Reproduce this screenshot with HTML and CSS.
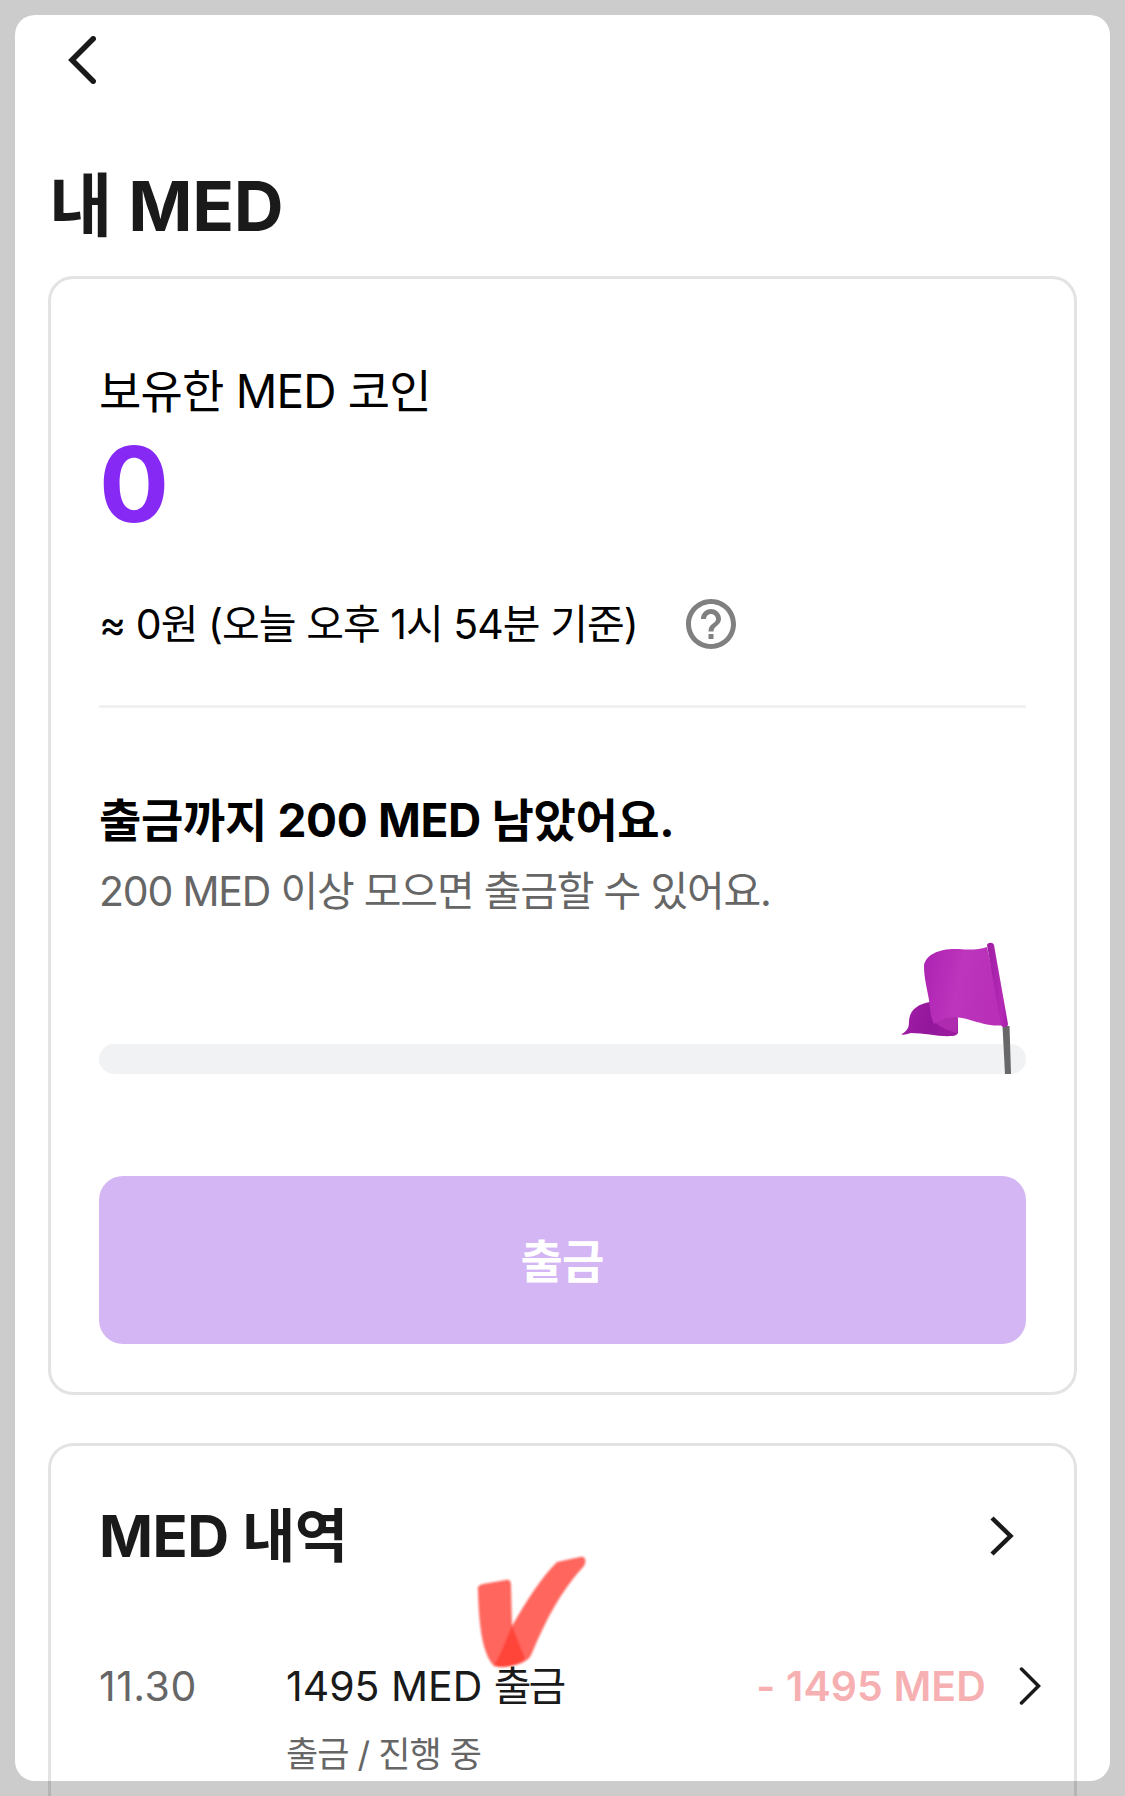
FILE: index.html
```html
<!DOCTYPE html>
<html lang="ko">

<head>
    <meta charset="UTF-8">
    <meta name="viewport" content="width=device-width, initial-scale=1.0">
    <title>내 MED</title>
    <link rel="stylesheet" href="styles.css">
</head>

<body>

    <div class="screen">
        <header class="topbar">
            <svg class="back" width="28" height="48" viewBox="0 0 28 48">
                <path d="M25.200 2.800L4 24L25.200 45.200" />
            </svg>
        </header>

        <h1 class="page-title">내 MED</h1>

        <section class="card balance">
            <p class="balance-label">보유한 MED 코인</p>
            <p class="balance-value">0</p>
            <div class="balance-rate">
                <span>≈ 0원 (오늘 오후 1시 54분 기준)</span>
                <svg class="help" width="60" height="60" viewBox="0 0 24 24">
                    <path d="M11 18h2v-2h-2v2zm1-16C6.480 2 2 6.480 2 12s4.480 10 10 10 10-4.480 10-10S17.520 2 12 2zm0 18c-4.410 0-8-3.590-8-8s3.590-8 8-8 8 3.590 8 8-3.590 8-8 8zm0-14c-2.210 0-4 1.790-4 4h2c0-1.100.9-2 2-2s2 .9 2 2c0 2-3 1.750-3 5h2c0-2.250 3-2.500 3-5 0-2.210-1.790-4-4-4z" />
                </svg>
            </div>

            <h2 class="goal-title">출금까지 200 MED 남았어요.</h2>
            <p class="goal-text">200 MED 이상 모으면 출금할 수 있어요.</p>
            <div class="progress">
                <svg class="flag" width="112" height="134" viewBox="0 0 112 134">
                    <defs>
                        <linearGradient id="cloth" x1="0" y1="0" x2="1" y2="0.2">
                            <stop offset="0" stop-color="#ab22b2" />
                            <stop offset="0.5" stop-color="#bd35bc" />
                            <stop offset="1" stop-color="#b92fb8" />
                        </linearGradient>
                        <linearGradient id="tail" x1="0" y1="0" x2="1" y2="0.2">
                            <stop offset="0" stop-color="#a41eaa" />
                            <stop offset="0.6" stop-color="#92179a" />
                            <stop offset="1" stop-color="#9c1ca0" />
                        </linearGradient>
                        <linearGradient id="sleeve" x1="0" y1="0" x2="1" y2="0">
                            <stop offset="0" stop-color="#9d1ca2" />
                            <stop offset="0.7" stop-color="#b42ab5" />
                            <stop offset="1" stop-color="#a51fa8" />
                        </linearGradient>
                    </defs>
                    <path d="M101.500 86L108.500 86L110 134L104 134Z" fill="#686868" />
                    <path d="M0 94.500C6 91 8 88 8 82C8 70 17 64 29 62L57 79V93C56 95 54 96 51 96C38 97 24 93 10 93C7 94 4 95 0 94.500Z" fill="url(#tail)" />
                    <path d="M30 74C32 86 46 90 56 93L57 77Z" fill="#ae2bb0" />
                    <path d="M23 26C24 14 40 8 58 9C68 10 77 10 86 7L103 85C91 87 80 83 69 80C56 76 44 76 33 84C29 76 29 68 28 60C26 48 23 38 23 26Z" fill="url(#cloth)" />
                    <path d="M86 5C87 2 92 2 93 5L107 84C107 88 101 88 100 85Z" fill="url(#sleeve)" />
                </svg>
            </div>
            <button class="withdraw" disabled>출금</button>
        </section>

        <section class="card history">
            <div class="history-head">
                <h2 class="history-title">MED 내역</h2>
                <svg class="more" width="24" height="40" viewBox="0 0 24 40">
                    <path d="M2 2L20.500 20L2 38" />
                </svg>
            </div>
            <div class="history-row">
                <span class="date">11.30</span>
                <div class="detail">
                    <span class="detail-name">1495 MED <span class="detail-type">출금</span></span>
                    <span class="detail-state">출금 / 진행 중</span>
                </div>
                <span class="amount">- 1495 MED</span>
                <svg class="go" width="22" height="38" viewBox="0 0 22 38">
                    <path d="M2.500 2L19.500 19L2.500 36" />
                </svg>
            </div>
            <!-- hand drawn check mark -->
            <svg class="check" width="120" height="124" viewBox="0 0 120 124">
                <path d="M3 36C2 33 4 31 8 30L31 26C34 25 36 27 36 31L37 72L50 105C41 112 28 115 19 112C8 100 4 76 3 36Z" />
                <path d="M19 112C27 98 32 84 37 72C52 46 66 24 82 8L105 3C110 2 112 6 109 12C85 38 71 66 57 99C54 109 38 114 19 112Z" />
            </svg>
        </section>
    </div>

    <div class="frame"></div>

</body>

</html>
```
FILE: styles.css
```css
* {
    box-sizing: border-box;
}

body {
    margin: 0;
    height: 1796px;
    overflow: hidden;
    background-color: #fff;
    color: #1a1a1a;
    font-family: Inter, "Noto Sans CJK KR", sans-serif;
}

h1,
h2,
p {
    margin: 0;
    white-space: nowrap;
}

.screen {
    padding: 36px 48px 0;
}

svg {
    display: block;
    flex-shrink: 0;
}

.back,
.more,
.go {
    fill: none;
    stroke: #1a1a1a;
}

.topbar {
    height: 128px;
    padding-left: 20px;
}

.back {
    stroke-width: 5.5;
    stroke-linecap: round;
}

.page-title {
    padding-left: 1px;
    font-size: 69px;
    line-height: 84px;
    font-weight: 700;
    letter-spacing: -0.3px;
}

.card {
    border: 3px solid #e3e3e3;
    border-radius: 25px;
    padding: 0 48px;
}

.balance {
    margin-top: 28px;
    height: 1119px;
    padding-top: 84px;
    color: #000;
}

.balance-label {
    font-size: 46px;
    line-height: 56px;
    letter-spacing: -0.8px;
}

.balance-value {
    margin-top: 10px;
    font-size: 104px;
    line-height: 110px;
    font-weight: 700;
    color: #8729f4;
}

.balance-rate {
    display: flex;
    align-items: center;
    gap: 43px;
    margin-top: 55px;
    height: 114px;
    padding-bottom: 51px;
    border-bottom: 3px solid #f1f1f1;
    font-size: 41px;
    line-height: 50px;
    letter-spacing: -0.95px;
    white-space: nowrap;
}

.help {
    fill: #808080;
}

.goal-title {
    margin-top: 84px;
    font-size: 46px;
    line-height: 56px;
    font-weight: 700;
    letter-spacing: -0.35px;
}

.goal-text {
    margin-top: 18px;
    font-size: 41px;
    line-height: 50px;
    letter-spacing: -1.2px;
    color: #666;
}

.progress {
    position: relative;
    margin-top: 128px;
    height: 30px;
    border-radius: 15px;
    background-color: #f1f2f4;
}

.flag {
    position: absolute;
    right: 13px;
    bottom: 0;
}

.withdraw {
    display: block;
    width: 100%;
    height: 168px;
    margin-top: 102px;
    padding: 0 1px 4px 0;
    border: none;
    border-radius: 24px;
    background-color: #d3b6f3;
    color: #fff;
    font-family: inherit;
    font-size: 46px;
    font-weight: 700;
    letter-spacing: -0.8px;
}

.history {
    position: relative;
    margin-top: 48px;
    height: 353px;
    padding-top: 55px;
    border-bottom: none;
    border-radius: 25px 25px 0 0;
}

.history-head {
    display: flex;
    align-items: center;
    justify-content: space-between;
    padding-right: 12px;
}

.history-title {
    font-size: 58px;
    line-height: 70px;
    font-weight: 700;
    letter-spacing: -0.5px;
}

.more {
    stroke-width: 4.5;
}

.history-row {
    display: flex;
    align-items: flex-start;
    margin-top: 90px;
    margin-right: -15px;
    font-size: 41px;
    line-height: 50px;
    white-space: nowrap;
}

.date {
    width: 187px;
    letter-spacing: 0.5px;
    color: #666;
}

.detail {
    display: flex;
    flex-direction: column;
    flex: 1;
}

.detail-type {
    letter-spacing: -3px;
}

.detail-state {
    margin-top: 21px;
    font-size: 35px;
    line-height: 44px;
    letter-spacing: -0.9px;
    color: #666;
}

.amount {
    font-weight: 600;
    letter-spacing: 0.1px;
    color: #f7b0b2;
}

.go {
    margin: 6px 0 0 33px;
    stroke-width: 3.5;
    stroke-linecap: round;
}

.check {
    position: absolute;
    left: 424px;
    top: 108px;
    fill: #ff3b30;
    fill-opacity: 0.78;
    filter: blur(1px);
}

/* rounded grey frame over the whole screen */
.frame {
    position: fixed;
    inset: 15px;
    border-radius: 20px;
    box-shadow: 0 0 0 60px rgba(0, 0, 0, 0.2);
    pointer-events: none;
}
```
